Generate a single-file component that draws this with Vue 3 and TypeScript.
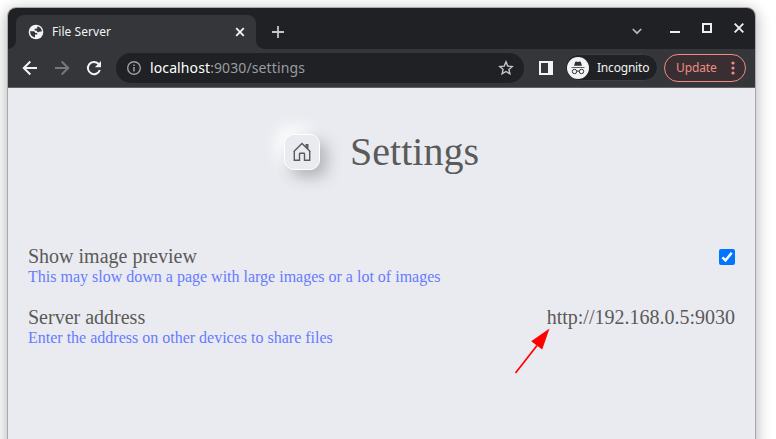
<script setup lang="ts">
import { ref } from 'vue'

interface Setting {
  title: string
  hint: string
  address?: string
}

const preview = ref<boolean>(true)
const settings: Setting[] = [
  { title: 'Show image preview', hint: 'This may slow down a page with large images or a lot of images' },
  {
    title: 'Server address',
    hint: 'Enter the address on other devices to share files',
    address: 'http://192.168.0.5:9030',
  },
]
</script>

<template>
  <div class="desktop">
    <div class="window">
      <header class="tabstrip">
        <div class="tab">
          <svg class="globe" width="16" height="16" viewBox="0 0 16 16">
            <circle cx="8" cy="8" r="7.3" fill="#f1f3f4" />
            <path d="M2 7.2H5.4Q7.2 7.4 7.3 9H9.2V10.6H7V13.6Q2.4 12.6 2 7.2Z M9.4 2.2Q13.6 3.4 13.9 7.6L11.6 7.4Q11.4 8.4 10 8.2 8.8 8 8.6 6.6H6.6Q6.2 4.6 7.8 4.4H9.2Z" fill="#35363a" />
          </svg>
          <span class="tab-title">File Server</span>
          <svg class="tab-close" width="10" height="10" viewBox="0 0 10 10"><path d="M1.2 1.2 8.8 8.8M8.8 1.2 1.2 8.8" stroke="#f1f3f4" stroke-width="1.9" /></svg>
        </div>
        <svg class="plus" width="12" height="12" viewBox="0 0 12 12"><path d="M6 0V12M0 6H12" stroke="#c6c7c9" stroke-width="1.8" /></svg>
        <div class="controls">
          <svg class="chevron" width="10" height="7" viewBox="0 0 10 7"><path d="M.8 1 5 5.2 9.2 1" fill="none" stroke="#b5b6b9" stroke-width="1.7" /></svg>
          <svg class="minimize" width="10" height="2" viewBox="0 0 10 2"><path d="M0 1H10" stroke="#eceef2" stroke-width="2" /></svg>
          <svg class="maximize" width="10" height="10" viewBox="0 0 10 10"><path d="M1 1H9V9H1Z" fill="none" stroke="#eceef2" stroke-width="2" /></svg>
          <svg class="close" width="10" height="10" viewBox="0 0 10 10"><path d="M.7 .7 9.3 9.3M9.3 .7 .7 9.3" stroke="#eceef2" stroke-width="1.9" /></svg>
        </div>
      </header>

      <nav class="toolbar">
        <svg class="arrow" width="16" height="16" viewBox="0 0 16 16"><path d="M15 8H2M8.3 1.5 1.8 8 8.3 14.5" fill="none" stroke="#f1f3f4" stroke-width="2" /></svg>
        <svg class="arrow" width="16" height="16" viewBox="0 0 16 16"><path d="M1 8H14M7.7 1.5 14.2 8 7.7 14.5" fill="none" stroke="#77787b" stroke-width="2" /></svg>
        <svg class="arrow" width="16" height="16" viewBox="0 0 16 16">
          <path d="M13.8 10A6.1 6.1 0 1 1 12.4 3.8L14 5.4" fill="none" stroke="#f1f3f4" stroke-width="2" />
          <path d="M15 1V7.2H8.8Z" fill="#f1f3f4" />
        </svg>
        <div class="omnibox">
          <svg class="info" width="16" height="16" viewBox="0 0 16 16">
            <circle cx="8" cy="8" r="6.3" fill="none" stroke="#9aa0a6" stroke-width="1.4" />
            <path d="M8 7V11.6M8 4.4V6" stroke="#9aa0a6" stroke-width="1.5" />
          </svg>
          <span class="url"><span class="host">localhost</span>:9030/settings</span>
          <svg class="star" width="16" height="16" viewBox="0 0 16 16"><path d="M8 1.9 9.8 6.1 14.2 6.5 10.9 9.4 11.9 13.8 8 11.5 4.1 13.8 5.1 9.4 1.8 6.5 6.2 6.1Z" fill="none" stroke="#c3c5c8" stroke-width="1.4" /></svg>
        </div>
        <svg class="panel" width="14" height="14" viewBox="0 0 14 14"><path d="M1 1H13V13H1Z" fill="none" stroke="#f1f3f4" stroke-width="2" /><path d="M9 1H13V13H9Z" fill="#f1f3f4" /></svg>
        <div class="incognito">
          <svg width="22" height="22" viewBox="0 0 22 22">
            <circle cx="11" cy="11" r="11" fill="#f1f3f4" />
            <path d="M4.5 10.8V10H17.5V10.8Z M7 8.8 8.1 5.2Q8.4 4.4 9.2 4.6L11 5.1 12.8 4.6Q13.6 4.4 13.9 5.2L15 8.8Z" fill="#303134" />
            <g fill="none" stroke="#303134" stroke-width="1"><circle cx="7.5" cy="14.5" r="2.2" /><circle cx="14.5" cy="14.5" r="2.2" /><path d="M9.7 14.4Q11 13.5 12.3 14.4" /></g>
          </svg>
          <span>Incognito</span>
        </div>
        <div class="update">
          <span>Update</span>
          <svg width="4" height="14" viewBox="0 0 4 14" fill="#f28b82"><circle cx="2" cy="2" r="1.6" /><circle cx="2" cy="7" r="1.6" /><circle cx="2" cy="12" r="1.6" /></svg>
        </div>
      </nav>

      <main class="page">
        <div class="heading">
          <a class="home">
            <svg width="20" height="20" viewBox="0 0 20 20"><path d="M1.6 9.8 10 1.6 18.4 9.8M2.3 9.5V18.3H7.5V12Q7.5 11.3 8.2 11.3H11.8Q12.5 11.3 12.5 12V18.3H17.7V9.5M14.2 5.2V2.7H15.8V7" fill="none" stroke="#5a5a5a" stroke-width="1.4" /></svg>
          </a>
          <h1>Settings</h1>
        </div>
        <section v-for="item in settings" :key="item.title" class="setting">
          <div>
            <div class="title">{{ item.title }}</div>
            <div class="hint">{{ item.hint }}</div>
          </div>
          <span v-if="item.address" class="address">{{ item.address }}</span>
          <label v-else class="check">
            <input v-model="preview" type="checkbox" />
            <svg v-if="preview" width="16" height="16" viewBox="0 0 16 16"><path d="M3.4 8.4 6.5 11.5 12.7 3.8" fill="none" stroke="#fff" stroke-width="2.5" /></svg>
          </label>
        </section>
      </main>
    </div>
    <svg class="pointer" width="40" height="50" viewBox="0 0 40 50"><path d="M5.5 48 27 20.5" stroke="#f00" stroke-width="1.7" /><path d="M39.5 3.5 21.2 16.2 32.2 24.5Z" fill="#f00" /></svg>
  </div>
</template>

<style>
body { overflow: hidden; background: #fff; }
</style>

<style scoped>
* { box-sizing: border-box; }
svg { display: block; flex: none; }
.desktop { position: relative; height: 439px; padding: 8px 21px 0 8px; overflow: hidden; background: #fff; }
.window { height: 460px; border-radius: 8px 8px 0 0; box-shadow: 0 0 0 1px #aaaaac, 0 3px 15px 1px rgba(0, 0, 0, .32); background: #eaebf0; overflow: hidden; }
.tabstrip { display: flex; height: 41px; padding: 7px 11px 0 8px; background: #202124; }
.tab { position: relative; display: flex; align-items: center; width: 240px; height: 34px; padding: 0 11px 0 12px; border-radius: 8px 8px 0 0; background: #35363a; color: #f1f3f4; font: 12px/16px "Noto Sans", sans-serif; }
.tab::before, .tab::after { content: ""; position: absolute; bottom: 0; width: 8px; height: 8px; }
.tab::before { left: -8px; background: radial-gradient(circle at 0 0, transparent 7.5px, #35363a 8px); }
.tab::after { right: -8px; background: radial-gradient(circle at 100% 0, transparent 7.5px, #35363a 8px); }
.tab-title { flex: 1; margin-left: 8px; letter-spacing: .05px; }
.plus { margin: 11px 0 0 16px; }
.controls { display: flex; flex: 1; justify-content: flex-end; }
.chevron { margin: 13px 28px 0 0; }
.minimize { margin: 16px 22px 0 0; }
.maximize { margin: 8px 22px 0 0; }
.close { margin-top: 8px; }
.toolbar { display: flex; align-items: center; height: 39px; padding: 0 9px 1px 14px; background: #35363a; border-bottom: 1px solid #606165; }
.arrow { margin-right: 16px; }
.omnibox { display: flex; align-items: center; width: 408px; height: 30px; margin-left: -2px; margin-right: 15px; padding: 0 10px; border-radius: 15px; background: #202124; }
.url { flex: 1; margin-left: 8px; color: #9a9da1; font: 14px/20px "Noto Sans", sans-serif; letter-spacing: .11px; }
.host { color: #fff; }
.incognito { display: flex; align-items: center; width: 93px; height: 27px; margin-left: 12px; padding-left: 1px; border: 1px solid #3d3e42; border-radius: 14px; background: #202124; color: #f1f3f4; font: 12px/16px "Noto Sans", sans-serif; letter-spacing: -.2px; }
.incognito span { margin-left: 8px; }
.update { display: flex; align-items: center; justify-content: space-between; width: 82px; height: 28px; margin-left: 6px; padding: 0 10px 0 11px; border: 1px solid #f28b82; border-radius: 14px; background: #392f32; color: #f28b82; font: 12px/16px "Noto Sans", sans-serif; letter-spacing: -.1px; }
.page { padding: 41px 20px 0; color: #5a5a5a; font-family: "Liberation Serif", serif; }
.heading { display: flex; align-items: center; justify-content: center; height: 46px; margin-bottom: 70px; gap: 30px; }
.home { display: grid; place-items: center; width: 36px; height: 36px; border: 1px solid #fff; border-radius: 10px; background: #eaebf0; box-shadow: 7px 7px 15px #b2b3b7, -7px -7px 15px #fff; }
h1 { margin: 0; font-size: 40px; font-weight: 400; line-height: 46px; }
.setting { display: flex; align-items: flex-start; justify-content: space-between; height: 41px; margin-bottom: 20px; }
.title, .address { font-size: 20px; line-height: 23px; }
.hint { color: #667bff; font-size: 16px; line-height: 18px; }
.check { position: relative; width: 16px; height: 16px; margin-top: 4px; }
.check input { appearance: none; display: block; width: 16px; height: 16px; margin: 0; border: 1px solid #767676; border-radius: 2px; }
.check input:checked { border: 0; background: #0075ff; }
.check svg { position: absolute; inset: 0; pointer-events: none; }
.pointer { position: absolute; left: 510px; top: 325px; }
</style>
